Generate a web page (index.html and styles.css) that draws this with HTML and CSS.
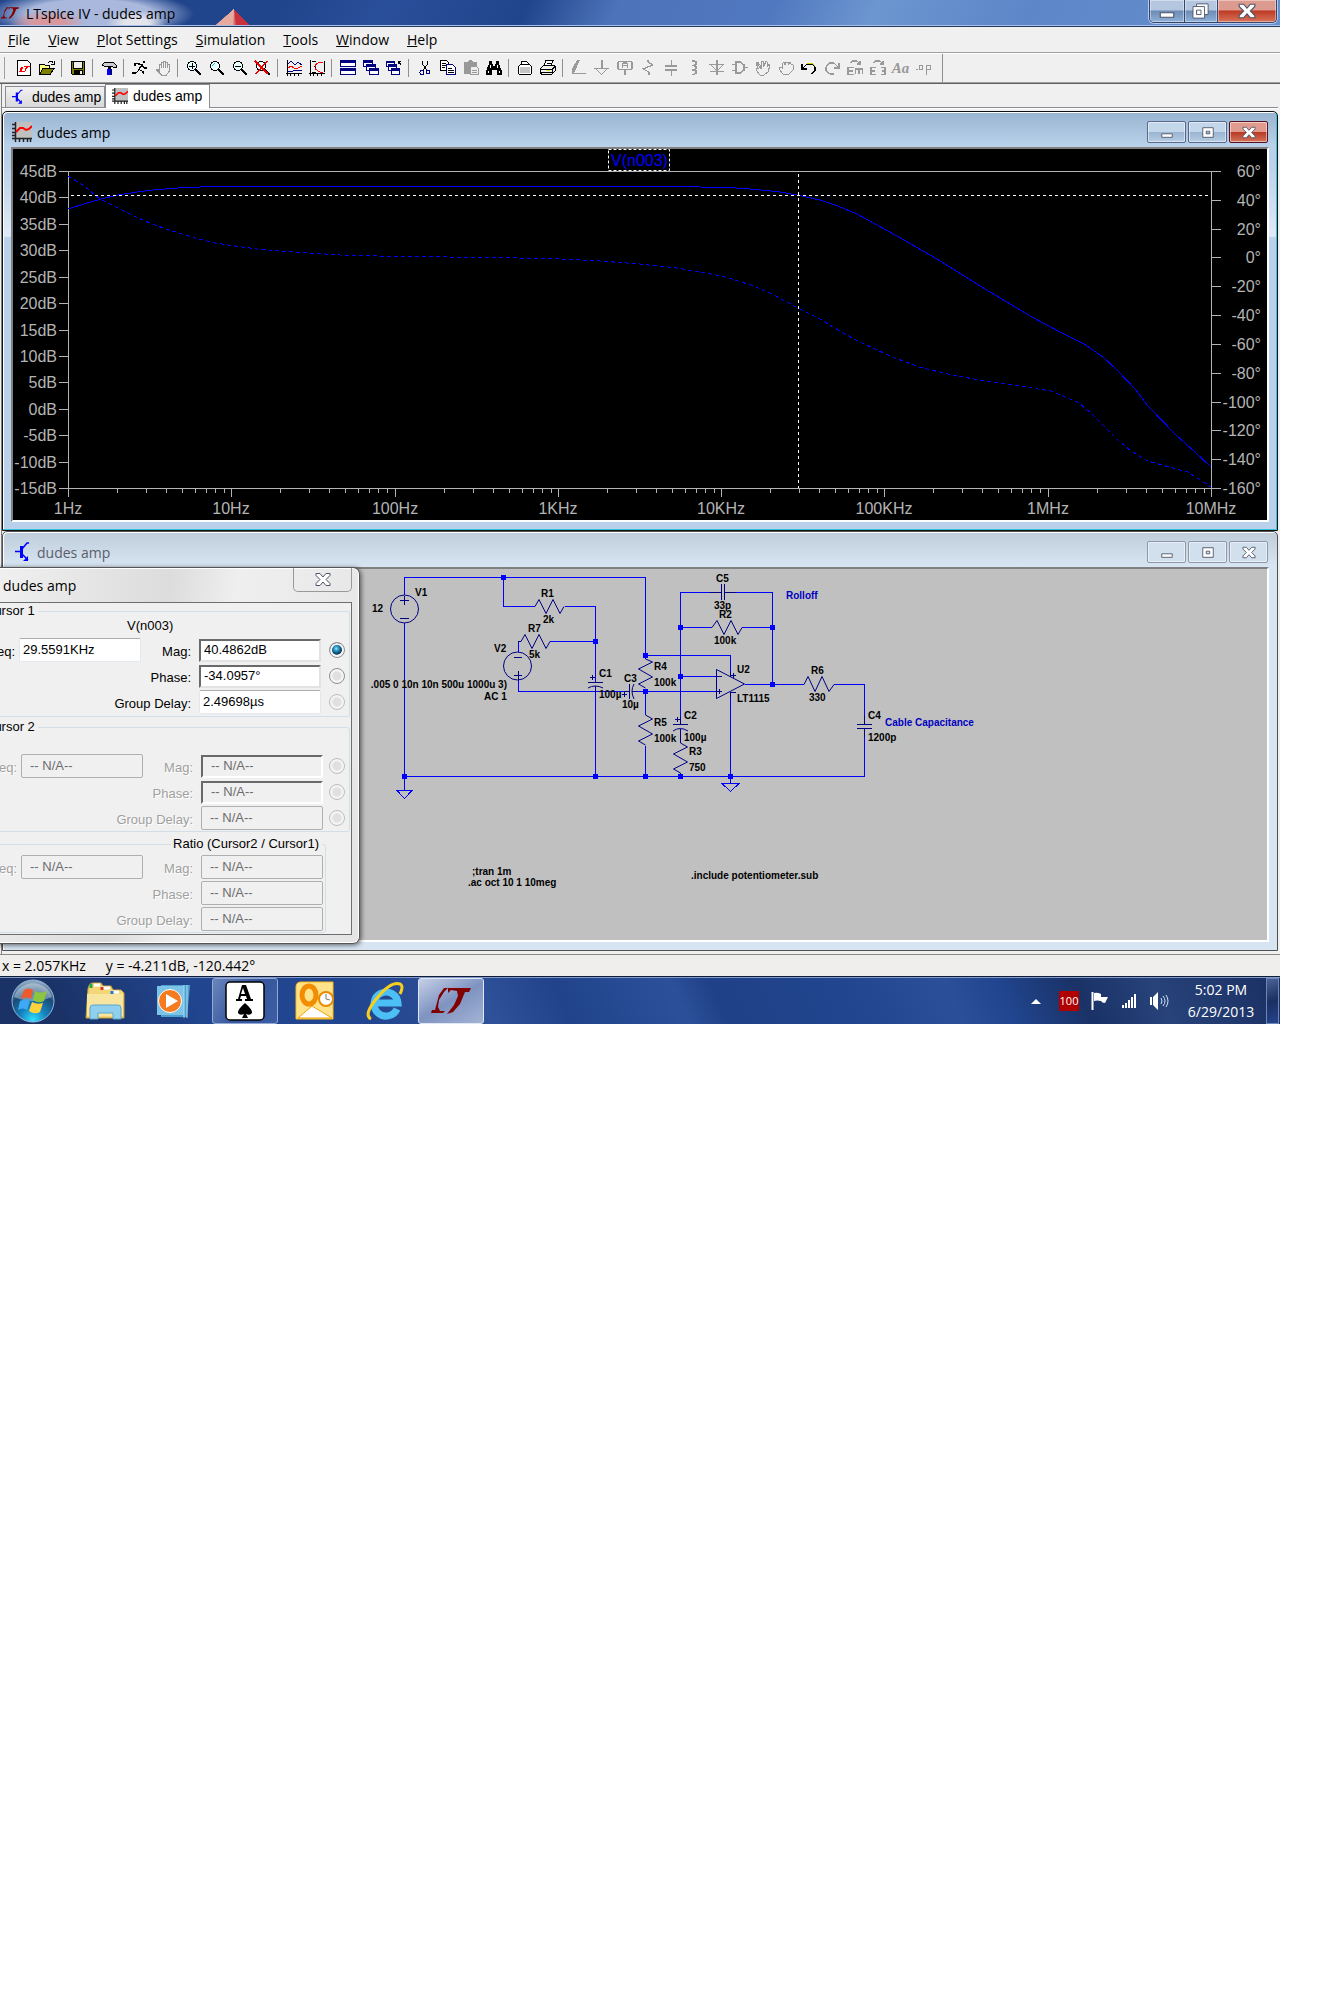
FILE: index.html
```html
<!DOCTYPE html>
<html lang="en">
<head>
<meta charset="utf-8">
<title>LTspice IV - dudes amp</title>
<link rel="stylesheet" href="styles.css">
</head>
<body>
<svg class="defs" width="0" height="0" aria-hidden="true">
  <defs>
    <symbol id="lt" viewBox="0 0 40 26"><path d="M13 0h4l-4 4-5 8-1 7 2 4h5l-2 2H0l1-3h3L8 7zM17 0h23l-2 4h-4l-5 12-7 8-6 2 7-9 4-9-1-5-6-1-3 3z" fill="#800000"/></symbol>
    <symbol id="wave" viewBox="0 0 20 20"><path fill="#c0c0c0" d="M3 0h17v17H3z"/><path d="M3.500 0v20M0 16.500h20M0 2.500h3M0 6.500h3M0 10.500h3M0 13.500h3M7.500 17v3M11.500 17v3M15.500 17v3M18.500 17v3" stroke="#222" stroke-width="1.500" fill="none"/><path d="M4 10l4-4h3l3 2 3-1 3-3" stroke="#f00" stroke-width="2" fill="none"/></symbol>
    <symbol id="npn" viewBox="0 0 16 20"><path d="M0 9.500h6M14 1h-2L7 7M7 12l6 6" stroke="#00f" stroke-width="1.500" fill="none"/><path fill="#00f" d="M5 4h3v12H5zM13 14v5H8z"/></symbol>
    <symbol id="xg" viewBox="0 0 16 14"><path d="M1 1h4l3 3.500L11 1h4v2l-4 4 4 4v2h-4L8 9.500 5 13H1v-2l4-4-4-4z" fill="#fff" stroke="#4c5468"/></symbol>
    <symbol id="ming" viewBox="0 0 16 14"><path d="M2 8.500h12v4H2z" fill="#fff" stroke="#4c5468"/></symbol>
    <symbol id="maxg" viewBox="0 0 16 14"><path fill-rule="evenodd" d="M2 1.500h12v11H2zM6 5.500v3h4v-3z" fill="#fff" stroke="#4c5468"/></symbol>
    <symbol id="lens" viewBox="0 0 16 16"><circle cx="6" cy="6" r="4.500" fill="#e8ffff" stroke="#000"/><path d="M10 10l5 5" stroke="#000" stroke-width="2"/></symbol>
  </defs>
</svg>

<main class="desktop">
  <header class="titlebar">
    <svg class="app-icon"><use href="#lt"/></svg>
    <h1 class="app-title">LTspice IV - dudes amp</h1>
    <div class="caption">
      <button class="cap cap-min" aria-label="Minimize"><svg><use href="#ming"/></svg></button>
      <button class="cap cap-max" aria-label="Restore"><svg viewBox="0 0 20 18"><path d="M5 1h13v12H5z" fill="#fff" stroke="#4c5468"/><path fill-rule="evenodd" d="M1 4h13v13H1zM5 8v5h5V8z" fill="#fff" stroke="#4c5468"/></svg></button>
      <button class="cap cap-close" aria-label="Close"><svg><use href="#xg"/></svg></button>
    </div>
  </header>

  <nav class="menubar">
    <a href="#"><u>F</u>ile</a><a href="#"><u>V</u>iew</a><a href="#"><u>P</u>lot Settings</a><a href="#"><u>S</u>imulation</a><a href="#"><u>T</u>ools</a><a href="#"><u>W</u>indow</a><a href="#"><u>H</u>elp</a>
  </nav>

  <div class="toolbar" role="toolbar" aria-label="Main">
    <button aria-label="New schematic"><svg viewBox="0 0 16 16"><path d="M1.500.5h10l3 3v12h-13z" fill="#fff" stroke="#000"/><path d="M3 12l2-5h2l-1 4h2l-1 1zM8 6h6l-1 1h-1l-3 5H8l2-5H8z" fill="#f00"/></svg></button>
    <button aria-label="Open"><svg viewBox="0 0 16 16"><path d="M.5 14V4.500h5l1 1h4V8" fill="#ffff80" stroke="#000"/><path d="M.5 14.500L4 8.500h11l-4 6z" fill="#808000" stroke="#000"/><path d="M9 3l2-2h2l1 2m1-2v3h-3" fill="none" stroke="#000"/></svg></button>
    <i></i>
    <button aria-label="Save"><svg viewBox="0 0 16 16"><path d="M1 1h14v14H2l-1-1z" fill="#000"/><path d="M2 2h1v7h10V2h1v12H2z" fill="#808000"/><path d="M4 2h8v6H4z" fill="#eee"/><path d="M4 10h9v4H4z" fill="#000"/><path d="M10 11h2v3h-2z" fill="#eee"/></svg></button>
    <i></i>
    <button aria-label="Control panel"><svg viewBox="0 0 16 16"><path d="M1 5l3-3h8l3 3v2h-3l-2-1H6L5 7 3 6z" fill="#ccc" stroke="#000"/><path d="M7 6h3v3H7z" fill="#000"/><path d="M6 9h5v6H6z" fill="#00f"/><path d="M9 9h2v6H9z" fill="#000080"/></svg></button>
    <i></i>
    <button aria-label="Run"><svg viewBox="0 0 16 16"><path d="M11 1h2v2h-2z"/><path d="M4 3.500l6 1-3 5 4 2 .5 3M10 5l2 3h3M7 10l-3 3H0M3 3v3" fill="none" stroke="#000" stroke-width="1.300"/></svg></button>
    <button aria-label="Halt" disabled><svg viewBox="0 0 16 16"><path d="M4.500 11V4h2V2h2V1h2v1h2v2h2v7l-3 4h-5l-5-5v-1h1zM6.500 4v4M8.500 3v5M10.500 3v5M12.500 4v4" fill="none" stroke="#999"/></svg></button>
    <i></i>
    <button aria-label="Zoom in"><svg viewBox="0 0 16 16"><use href="#lens"/><path d="M3 6h6M6 3v6" stroke="#000"/></svg></button>
    <button aria-label="Pan"><svg viewBox="0 0 16 16"><use href="#lens"/><path d="M3 6l3-3" stroke="#0cc"/></svg></button>
    <button aria-label="Zoom out"><svg viewBox="0 0 16 16"><use href="#lens"/><path d="M3 6h6" stroke="#000"/></svg></button>
    <button aria-label="Zoom to fit"><svg viewBox="0 0 16 16"><use href="#lens"/><path d="M0 1l13 13M12 1L1 14" stroke="#e00" stroke-width="1.500"/></svg></button>
    <i></i>
    <button aria-label="Autorange"><svg viewBox="0 0 16 16"><path d="M1.500 0v16M0 13.500h16M4.500 14v2M8.500 14v2M12.500 14v2" stroke="#000"/><path d="M2 4l3-3 4 4 3-3 4 3M2 11h5l2-1h7" fill="none" stroke="#000080"/><path d="M2 8l3-2 3 2h4l4-2" fill="none" stroke="#f00"/></svg></button>
    <button aria-label="Pick traces"><svg viewBox="0 0 16 16"><path d="M1.500 0v16M0 13.500h16M4.500 14v2M8.500 14v2M12.500 14v2M15.500 1v11" stroke="#000"/><path d="M14 2h-3L6 5v4l5 3h3" fill="none" stroke="#f00"/><path d="M3 1h4M3 12h4M5 6l2 2" stroke="#000"/></svg></button>
    <i></i>
    <button aria-label="Tile windows"><svg viewBox="0 0 16 16"><path d="M.5.500h15v6H.5zM.5 8.500h15v6H.5z" fill="#fff" stroke="#000080"/><path d="M0 0h16v3H0zM0 8h16v3H0z" fill="#000080"/></svg></button>
    <button aria-label="Cascade windows"><svg viewBox="0 0 16 16"><path d="M.5.500h9v6h-9zM3.500 4.500h9v6h-9zM6.500 8.500h9v6h-9z" fill="#fff" stroke="#000080"/><path d="M0 0h10v3H0zM3 4h10v3H3zM6 8h10v3H6z" fill="#000080"/></svg></button>
    <button aria-label="Close windows"><svg viewBox="0 0 16 16"><path d="M.5 1.500h8v5h-8zM2.500 4.500h8v6h-8zM5.500 8.500h8v6h-8z" fill="#fff" stroke="#000080"/><path d="M0 1h9v2H0zM2 4h9v3H2zM5 8h9v3H5z" fill="#000080"/><path d="M15 5l-3-4M12 4V1h3" fill="none" stroke="#000"/></svg></button>
    <i></i>
    <button aria-label="Cut"><svg viewBox="0 0 16 16"><path d="M5.500 1v3l4 6M10.500 1v3l-4 6" fill="none" stroke="#000"/><circle cx="5" cy="12.500" r="2" fill="none" stroke="#000080"/><circle cx="11" cy="12" r="2" fill="none" stroke="#000080"/></svg></button>
    <button aria-label="Copy"><svg viewBox="0 0 16 16"><path d="M.5.500h6l2 2v8h-8z" fill="#fff" stroke="#000"/><path d="M6.500 4.500h6l3 3v7h-9z" fill="#fff" stroke="#000080"/><path d="M2 3h4M2 5h4M2 7h3M8 8h4M8 10h6M8 12h6" stroke="#000"/></svg></button>
    <button aria-label="Paste"><svg viewBox="0 0 16 16"><path d="M1 2h4l1-2h3l1 2h4v12H1z" fill="#999"/><path d="M7.500 6.500h6l2 2v6h-8z" fill="#eee" stroke="#999"/><path d="M9 10h5M9 12h5" stroke="#999"/></svg></button>
    <button aria-label="Find"><svg viewBox="0 0 16 16"><path d="M3 1h3v3h1v2h2V4h1V1h3v3l3 7v4h-5v-5H6v5H0v-4l3-7z"/><path d="M4 5v3M11 5v3M2 11v2M13 11v2" stroke="#fff"/></svg></button>
    <i></i>
    <button aria-label="Print setup"><svg viewBox="0 0 16 16"><path d="M4.500 5V1.500h5l2 2V5M1.500 6.500l2-2h9l2 2v7l-1 1h-11l-1-1z" fill="#fff" stroke="#000" stroke-width="1.300"/><path d="M3 7h10v6H3z" fill="#c4c4c4"/></svg></button>
    <button aria-label="Print"><svg viewBox="0 0 16 16"><path d="M4 6l2-5.500h7L11 6" fill="#fff" stroke="#000"/><path d="M.5 8.500l3-3h10l2 1v4l-4 4h-10l-1-2z" fill="#eee" stroke="#000" stroke-width="1.300"/><path d="M1 9h11l3-2M1 12h11M12 9v5M7 3h4M6 5h4" fill="none" stroke="#000"/><path d="M7 10h3v1H7z" fill="#dd0"/></svg></button>
    <i></i>
    <button aria-label="Wire" disabled><svg viewBox="0 0 16 16"><path d="M6 0h3L4 11l-3 3V9z" fill="#999"/><path d="M1 13.500h14" stroke="#999"/></svg></button>
    <button aria-label="Ground" disabled><svg viewBox="0 0 16 16"><path d="M8 0v8M0 8.500h15M2 9l5.500 5.500L13 9" fill="none" stroke="#999" stroke-width="1.300"/></svg></button>
    <button aria-label="Label net" disabled><svg viewBox="0 0 16 16"><path d="M2 1.500h12l1 1v6l-1 1H2l-1-1v-6zM8 10v5M5.500 8V4l1-1h3l1 1v4M5 5.500h6" fill="none" stroke="#999" stroke-width="1.300"/></svg></button>
    <button aria-label="Resistor" disabled><svg viewBox="0 0 16 16"><path d="M8 0v2l5 3-10 4 6 3v3" fill="none" stroke="#999" stroke-width="1.300"/></svg></button>
    <button aria-label="Capacitor" disabled><svg viewBox="0 0 16 16"><path d="M8 0v6M8 10v6" stroke="#999"/><path d="M2 6h12M2 10h12" stroke="#999" stroke-width="2"/></svg></button>
    <button aria-label="Inductor" disabled><svg viewBox="0 0 16 16"><path d="M6 1h2l2 1v2L8 5.500H6M8 5.500l2 1v2L8 10H6M8 10l2 1v2l-2 1.500H6" fill="none" stroke="#999" stroke-width="1.500"/></svg></button>
    <button aria-label="Diode" disabled><svg viewBox="0 0 16 16"><path d="M8 0v15M0 4.500h15M2 5l6 6 6-6M1 11.500h14" fill="none" stroke="#999" stroke-width="1.300"/></svg></button>
    <button aria-label="Component" disabled><svg viewBox="0 0 16 16"><path d="M0 4.500h4M0 10.500h4M4 2h4l4 3v5l-4 3H4zM12 7.500h4" fill="none" stroke="#999" stroke-width="1.500"/></svg></button>
    <button aria-label="Move" disabled><svg viewBox="0 0 16 16"><path d="M5 15L1 10V8h2L1 3l2-1 3 5V1h2l1 5 2-5 1 1v5l2-3 1 1-2 7-4 3zM2 3l4 6M8 2v5" fill="none" stroke="#999"/></svg></button>
    <button aria-label="Drag" disabled><svg viewBox="0 0 16 16"><path d="M5 14l-4-5V7l3 1V4l2-2 1 3 1-3h2v3l2-3 1 2 2 1v5l-4 4z" fill="none" stroke="#999"/></svg></button>
    <button aria-label="Undo"><svg viewBox="0 0 16 16"><path d="M1 4v5h5M2 8l4-4h5l3 3v4l-4 3" fill="none" stroke="#000" stroke-width="1.300"/><path d="M6 3h5l3 3" fill="none" stroke="#cc0"/></svg></button>
    <button aria-label="Redo" disabled><svg viewBox="0 0 16 16"><path d="M15 3v5h-5M14 7l-4-4H5L2 7v4l4 3h4" fill="none" stroke="#999" stroke-width="1.300"/></svg></button>
    <button aria-label="Rotate" disabled><svg viewBox="0 0 16 16"><path d="M3 3l3-2h4l3 3M13 1v3h-3M7 7.500H1v7h6M1 11h5M8.500 14V9h7v5M12 9v5" fill="none" stroke="#999" stroke-width="1.400"/></svg></button>
    <button aria-label="Mirror" disabled><svg viewBox="0 0 16 16"><path d="M3 3l3-2h4l3 3M13 1v3h-3M6 7.500H1v7h5M1 11h4M11 7.500h4v7h-4M12 11h3" fill="none" stroke="#999" stroke-width="1.400"/></svg></button>
    <button aria-label="Text" class="txt" disabled><em>Aa</em></button>
    <button aria-label="SPICE directive" disabled><svg viewBox="0 0 16 16"><path d="M0 9h2v1H0z" fill="#999"/><path d="M3.500 5.500h3v4h-3zM10.500 15V5.500h4v4h-4" fill="none" stroke="#999" stroke-width="1.500"/></svg></button>
    <i class="end"></i>
  </div>

  <section class="workspace">
    <div class="tabs">
      <button class="tab"><svg class="ic-npn"><use href="#npn"/></svg>dudes amp</button>
      <button class="tab tab-on"><svg class="ic-wave"><use href="#wave"/></svg>dudes amp</button>
    </div>

    <article class="win win-active">
      <header class="win-title">
        <svg class="win-icon"><use href="#wave"/></svg>
        <h2>dudes amp</h2>
        <div class="win-btns">
          <button aria-label="Minimize"><svg><use href="#ming"/></svg></button>
          <button aria-label="Maximize"><svg><use href="#maxg"/></svg></button>
          <button class="close" aria-label="Close"><svg><use href="#xg"/></svg></button>
        </div>
      </header>
      <svg class="canvas plot" viewBox="13 149 1254 371">
        <rect x="608.500" y="149.500" width="61" height="21" fill="none" stroke="#fff" stroke-dasharray="3 2"/>
        <text x="611" y="166" fill="#0000ff">V(n003)</text>
        <g class="axis">
          <path d="M59 171.500H1221M68.500 171V497M1211.500 171V497M59 488.500H1221"/>
          <path d="M59 197.500h9M59 224.500h9M59 250.500h9M59 277.500h9M59 303.500h9M59 330.500h9M59 356.500h9M59 382.500h9M59 409.500h9M59 435.500h9M59 462.500h9"/>
          <path d="M1212 200.500h9M1212 229.500h9M1212 257.500h9M1212 286.500h9M1212 315.500h9M1212 344.500h9M1212 373.500h9M1212 402.500h9M1212 430.500h9M1212 459.500h9"/>
          <path d="M231.500 488v9M395.500 488v9M558.500 488v9M721.500 488v9M884.500 488v9M1048.500 488v9"/>
          <path d="M117.500 488v5m29-5v5m20-5v5m16-5v5m13-5v5m11-5v5m9-5v5m9-5v5M280.500 488v5m29-5v5m20-5v5m16-5v5m13-5v5m11-5v5m9-5v5m9-5v5M444.500 488v5m29-5v5m20-5v5m16-5v5m13-5v5m11-5v5m9-5v5m9-5v5M607.500 488v5m29-5v5m20-5v5m16-5v5m13-5v5m11-5v5m9-5v5m9-5v5M770.500 488v5m29-5v5m20-5v5m16-5v5m13-5v5m11-5v5m9-5v5m9-5v5M933.500 488v5m29-5v5m20-5v5m16-5v5m13-5v5m11-5v5m9-5v5m9-5v5M1097.500 488v5m29-5v5m20-5v5m16-5v5m13-5v5m11-5v5m9-5v5m9-5v5"/>
        </g>
        <g class="lab end">
          <text x="57" y="177">45dB</text><text x="57" y="203">40dB</text><text x="57" y="230">35dB</text><text x="57" y="256">30dB</text><text x="57" y="283">25dB</text><text x="57" y="309">20dB</text><text x="57" y="336">15dB</text><text x="57" y="362">10dB</text><text x="57" y="388">5dB</text><text x="57" y="415">0dB</text><text x="57" y="441">-5dB</text><text x="57" y="468">-10dB</text><text x="57" y="494">-15dB</text>
          <text x="1261" y="177">60°</text><text x="1261" y="206">40°</text><text x="1261" y="235">20°</text><text x="1261" y="263">0°</text><text x="1261" y="292">-20°</text><text x="1261" y="321">-40°</text><text x="1261" y="350">-60°</text><text x="1261" y="379">-80°</text><text x="1261" y="408">-100°</text><text x="1261" y="436">-120°</text><text x="1261" y="465">-140°</text><text x="1261" y="494">-160°</text>
        </g>
        <g class="lab mid">
          <text x="68" y="514">1Hz</text><text x="231" y="514">10Hz</text><text x="395" y="514">100Hz</text><text x="558" y="514">1KHz</text><text x="721" y="514">10KHz</text><text x="884" y="514">100KHz</text><text x="1048" y="514">1MHz</text><text x="1211" y="514">10MHz</text>
        </g>
        <path class="trace" d="M68 209L84 204L101 199L118 195L137 192L153 190L178 188L200 187L250 186.500H676L700 187L726 187.500L745 188.500L761 190L780 192L797 195L820 200L838 206L857 214L897 236L937 259L985 289L1032 317L1060 332L1084 344L1103 357L1117 370L1136 390L1148 406L1176 435L1195 452L1211 467"/>
        <path class="trace dash" d="M68 176L84 186L100 199L118 208L136 217L152 224L166 229L195 238L215 243L235 246L257 249L280 251L310 253L340 255L400 256.500L500 257.500L560 259L600 261L640 264L677 268L722 276L751 285L772 294L798 308L820 319L843 333L862 343L890 356L919 367L952 375L985 381L1013 385L1032 388L1051 391L1079 403L1093 415L1107 429L1119 441L1131 451L1148 461L1169 467L1188 472L1211 487"/>
        <path class="cursor" d="M71 195.500H1210M798.500 174V488"/>
      </svg>
    </article>

    <article class="win win-idle">
      <header class="win-title">
        <svg class="win-icon win-npn"><use href="#npn"/></svg>
        <h2>dudes amp</h2>
        <div class="win-btns">
          <button aria-label="Minimize"><svg><use href="#ming"/></svg></button>
          <button aria-label="Maximize"><svg><use href="#maxg"/></svg></button>
          <button aria-label="Close"><svg><use href="#xg"/></svg></button>
        </div>
      </header>
      <svg class="canvas schem" viewBox="13 569 1254 371">
        <g class="wire">
          <path d="M404.500 595V577.500H645.500V655M503.500 577V606.500H535M565 606.500H595.500V682M550 641.500H595M518.500 652V641.500M518.500 680V691.500H624M636 691.500H716M595.500 691V776M404.500 623V790M404 776.500H864.500V733M645.500 689V715M645.500 746V776M645 655.500H730.500V672M680.500 720V592.500H712M734 592.500H772.500V684M680 627.500H712M742 627.500H772M680 676.500H716M730.500 698V783M745 684.500H804M834 684.500H864.500V720"/>
          <path d="M397 790.500h15l-7.500 8zM722 783.500h17l-8.500 8z"/>
        </g>
        <g class="part">
          <circle cx="404.500" cy="609" r="14"/><circle cx="517.500" cy="666" r="14"/>
          <path d="M400 600.500h9M404.500 596v9M400 618.500h9M514 657.500h8M514 675.500h8M518.500 671v9"/>
          <path d="M535 606.500l4-7 7 14 7-14 7 14 4-7M518 641.500h3l4-7 7 14 7-14 7 14 4-7M712 627.500l5-7 7 14 7-14 7 14 4-7M804 684.500l4-8 7 15 7-15 7 15 5-7"/>
          <path d="M645.500 655v4l7 3-14 7 14 8-14 7 7 4M645.500 715l7 4-14 7 14 8-14 7 7 4M680.500 743l7 4-14 7 14 8-14 7 7 4v3"/>
          <path d="M588 682.500h15M595.500 686v6M588 688q7-4 15 0M590 677.500h5M592.500 675v5M629.500 684v15M634 684q-4 7 0 15M624 691.500h5M632 691.500h5M622 694.500h5M624.500 692v5M673 724.500h15M680.500 717v7M673 731q7-5 15 0M680.500 729v14M675 719.500h5M677.500 717v5M721.500 584v16M724.500 584v16M710 592.500h11M725 592.500h11M857 724.500h15M857 728.500h15M864.500 716v8M864.500 729v8"/>
          <path d="M716.500 669.500V698.500L744.500 684zM717 676.500h5M717 691.500h5M719.500 689v5M731 675.500h5M733.500 673v5M731 692.500h5M730.500 672v5M730.500 692v6"/>
        </g>
        <path class="node" d="M501 575h5v5h-5zM593 639h5v5h-5zM643 653h5v5h-5zM643 689h5v5h-5zM402 774h5v5h-5zM593 774h5v5h-5zM643 774h5v5h-5zM678 774h5v5h-5zM728 774h5v5h-5zM678 625h5v5h-5zM678 674h5v5h-5zM770 625h5v5h-5zM770 682h5v5h-5z"/>
        <g class="ref">
          <text x="415" y="596">V1</text><text x="372" y="612">12</text><text x="541" y="597">R1</text><text x="543" y="623">2k</text><text x="528" y="632">R7</text><text x="529" y="658">5k</text><text x="494" y="652">V2</text>
          <text x="507" y="688" text-anchor="end">.005 0 10n 10n 500u 1000u 3)</text><text x="484" y="700">AC 1</text><text x="599" y="677">C1</text><text x="599" y="698">100µ</text><text x="624" y="682">C3</text><text x="622" y="708">10µ</text><text x="654" y="670">R4</text><text x="654" y="686">100k</text><text x="654" y="726">R5</text><text x="654" y="742">100k</text>
          <text x="716" y="582">C5</text><text x="714" y="609">33p</text><text x="719" y="618">R2</text><text x="714" y="644">100k</text><text x="737" y="673">U2</text><text x="737" y="702">LT1115</text><text x="684" y="719">C2</text><text x="684" y="741">100µ</text><text x="689" y="755">R3</text><text x="689" y="771">750</text><text x="811" y="674">R6</text><text x="809" y="701">330</text><text x="868" y="719">C4</text><text x="868" y="741">1200p</text>
          <text x="472" y="875">;tran 1m</text><text x="468" y="886">.ac oct 10 1 10meg</text><text x="691" y="879">.include potentiometer.sub</text>
          <g fill="#0000c0"><text x="786" y="599">Rolloff</text><text x="885" y="726">Cable Capacitance</text></g>
        </g>
      </svg>
    </article>
  </section>

  <footer class="status"><span>x = 2.057KHz</span><span>y = -4.211dB, -120.442°</span></footer>

  <form class="dialog">
    <header class="dlg-title"><h2>dudes amp</h2><button type="button" class="dlg-close" aria-label="Close"><svg><use href="#xg"/></svg></button></header>
    <div class="dlg-body">
      <fieldset class="grp g1">
        <legend>Cursor 1</legend>
        <p class="net">V(n003)</p>
        <div class="fields">
          <label for="f1">Freq:</label><input id="f1" value="29.5591KHz"><label for="m1">Mag:</label><input class="deep" id="m1" value="40.4862dB"><input type="radio" name="c" checked aria-label="Magnitude 1">
          <label class="wide" for="p1">Phase:</label><input class="deep" id="p1" value="-34.0957°"><input type="radio" name="c" aria-label="Phase 1">
          <label class="wide" for="d1">Group Delay:</label><input id="d1" value="2.49698µs"><input type="radio" name="c" disabled aria-label="Group delay 1">
        </div>
      </fieldset>
      <fieldset class="grp g2">
        <legend>Cursor 2</legend>
        <div class="fields off">
          <label for="f2">Freq:</label><input id="f2" value="-- N/A--" disabled><label for="m2">Mag:</label><input class="deep" id="m2" value="-- N/A--" disabled><input type="radio" name="c" disabled aria-label="Magnitude 2">
          <label class="wide" for="p2">Phase:</label><input class="deep" id="p2" value="-- N/A--" disabled><input type="radio" name="c" disabled aria-label="Phase 2">
          <label class="wide" for="d2">Group Delay:</label><input id="d2" value="-- N/A--" disabled><input type="radio" name="c" disabled aria-label="Group delay 2">
        </div>
      </fieldset>
      <fieldset class="grp g3">
        <legend>Ratio (Cursor2 / Cursor1)</legend>
        <div class="fields off">
          <label for="f3">Freq:</label><input id="f3" value="-- N/A--" disabled><label for="m3">Mag:</label><input id="m3" value="-- N/A--" disabled>
          <label class="wide" for="p3">Phase:</label><input id="p3" value="-- N/A--" disabled>
          <label class="wide" for="d3">Group Delay:</label><input id="d3" value="-- N/A--" disabled>
        </div>
      </fieldset>
    </div>
  </form>

  <nav class="taskbar" aria-label="Taskbar">
    <button class="start" aria-label="Start"><svg viewBox="0 0 44 44"><defs><radialGradient id="orb" cx=".5" cy=".95" r=".9"><stop offset="0" stop-color="#2fe0ff"/><stop offset=".35" stop-color="#1583c0"/><stop offset=".7" stop-color="#1b4a78"/><stop offset="1" stop-color="#8aa5bd"/></radialGradient></defs><circle cx="22" cy="22" r="21" fill="url(#orb)" stroke="#8fb6d8"/><path d="M3 18a20 20 0 0138 0q-19 8-38 0z" fill="#fff" opacity=".35"/><path d="M13 11q5-3 9 0l-2 9q-5-3-10 0z" fill="#f0592a"/><path d="M24 12q5 3 12 0l-3 10q-6 3-11-1z" fill="#8cc63f"/><path d="M9 22q5-3 10 0l-3 9q-4-3-9 0z" fill="#3fa9f5"/><path d="M21 23q5 3 11 1l-3 9q-6 3-11-1z" fill="#ffd23c"/></svg></button>
    <button class="task explorer" aria-label="Explorer"><svg viewBox="0 0 40 40"><path d="M3 8q1-6 5-6h8l2 3h8l2 4h8l3 3v25H1z" fill="#f3d678" stroke="#c8a038"/><path d="M9 4h6M17 7h8M27 11h7" stroke="#fff" stroke-width="3"/><path d="M6 3v4" stroke="#2a4" stroke-width="3"/><path d="M17 6v3" stroke="#d32" stroke-width="3"/><path d="M27 10v3" stroke="#27c" stroke-width="3"/><path d="M2 13h36v22H2z" fill="#f8e6a0"/><path d="M5 27q0-3 3-3h25q3 0 3 3v11h-8v-6H13v6H5z" fill="#8fd0ee" stroke="#5aa6cf"/></svg></button>
    <button class="task media" aria-label="Media player"><svg viewBox="0 0 40 40"><path d="M8 4h29l-3 32H8z" fill="#4d9fd0"/><path d="M4 5h27v29H4z" fill="#7cc3e8"/><path d="M31 4v33M34 4v33" stroke="#a9dcf2"/><circle cx="17" cy="20" r="11.500" fill="#f47b20" stroke="#fff"/><path d="M13 13v14l12-7z" fill="#fff"/></svg></button>
    <button class="task open" aria-label="Solitaire"><svg viewBox="0 0 40 40"><rect x="1" y="1" width="38" height="38" rx="4" fill="#fff" stroke="#000" stroke-width="1.500"/><path d="M17 4h4l5 14h2v2h-8v-2h2l-1-3h-5l-1 3h2v2h-6v-2h2zM18 7l-2 6h4z"/><path d="M20 22q8 7 7 10-2 3-6 1l2 4h-6l2-4q-4 2-6-1-1-3 7-10z"/></svg></button>
    <button class="task" aria-label="Outlook"><svg viewBox="0 0 40 40"><path d="M2 6q0-5 5-5h32v37H2z" fill="#ffe28a" stroke="#fdb913"/><path d="M4 37l14-12 20 12z" fill="#fff" stroke="#f0a500"/><ellipse cx="15" cy="14" rx="7" ry="9" fill="none" stroke="#f28c00" stroke-width="5"/><circle cx="32" cy="18" r="7" fill="#fff" stroke="#e98b00" stroke-width="2"/><path d="M32 13v5l4 1" fill="none" stroke="#777"/></svg></button>
    <button class="task" aria-label="Internet Explorer"><svg viewBox="0 0 40 40"><path d="M32 28A12 12 0 1133 22H12" fill="none" stroke="#4cc0f4" stroke-width="7"/><path d="M6 38Q-2 34 12 17T35 3q4 2 0 10" fill="none" stroke="#f8cf1c" stroke-width="3"/></svg></button>
    <button class="task open current" aria-label="LTspice"><svg class="lt-big"><use href="#lt"/></svg></button>
    <div class="tray">
      <svg width="10" height="6" viewBox="0 0 10 6"><path d="M0 6l5-5 5 5z" fill="#fff"/></svg>
      <span class="batt">100</span>
      <svg width="18" height="20" viewBox="0 0 18 20"><path d="M1.500 1v18" stroke="#fff" stroke-width="2"/><path d="M3 2q3-1 7 1v3h7l-3 6q-3 0-4-2-4-1-7 0z" fill="#fff"/></svg>
      <svg width="16" height="16" viewBox="0 0 16 16"><path d="M1 12h2v3H1zM4 10h2v5H4zM7 7h2v8H7zM10 4h2v11h-2zM13 1h2v14h-2z" fill="#fff"/></svg>
      <svg width="20" height="20" viewBox="0 0 20 20"><path d="M1 6h2v8H1zM4 6l5-5v18l-5-5z" fill="#fff"/><path d="M12 7q2 3 0 6M14 5q4 5 0 10M17 4q4 6 0 12" fill="none" stroke="#cfe0f5"/></svg>
      <time class="clock"><span>5:02 PM</span><span>6/29/2013</span></time>
    </div>
    <button class="peek" aria-label="Show desktop"></button>
  </nav>
</main>
</body>
</html>
```
FILE: styles.css
```css
* { box-sizing: border-box; }
body { margin: 0; background: #fff; font-family: "Open Sans", "Noto Sans", sans-serif; font-size: 14px; color: #000; }
h1, h2, p { margin: 0; font-size: 14px; font-weight: 400; }
button { margin: 0; padding: 0; border: 0; background: none; font: inherit; color: inherit; }
svg { display: block; }
.defs { position: absolute; }

.desktop { position: relative; margin-right: 48px; overflow: hidden; background: #f0f0f0; }

/* main title bar */
.titlebar {
  display: flex; align-items: center; height: 27px; padding-right: 3px;
  border-bottom: 1px solid #26395f; box-shadow: inset 0 -1px #a9c0ea;
  background:
    radial-gradient(ellipse 38px 14px at 48px 24px, #d9969c 40%, #d9969c00 100%),
    radial-gradient(ellipse 30px 14px at 136px 24px, #e4e4ec 40%, #e4e4ec00 100%),
    radial-gradient(ellipse 104px 24px at 90px 14px, #a9b8dc 60%, #a9b8dc00 100%),
    conic-gradient(from 136deg at 234px 9px, #c8323c 0 34deg, #e6aa9e 50deg 92deg, transparent 94deg) 0 0 / 100% 100%,
    linear-gradient(115deg, #21458c 0 22%, #2a4f9a 30%, #21458c 41%, #4d74ba 48%, #5078c0 60%, #6c96cf 68%, #5c86c8 80%, #668fce 100%);
}
.app-icon { width: 18px; height: 12px; margin: 0 7px 0 1px; }
.app-title { flex: 1; padding-top: 2px; line-height: 20px; }
.caption { display: flex; align-self: flex-start; height: 23px; border: 1px solid #34466e; border-top: 0; border-radius: 0 0 5px 5px; overflow: hidden; box-shadow: 0 0 0 1px #b4c8ea; }
.cap { display: grid; place-items: center; border-right: 1px solid #34466e; background: linear-gradient(#b5c7e0 0 45%, #6c8cb6 50%, #8fb0d8); box-shadow: inset 0 0 0 1px #ffffff66; }
.cap svg { width: 18px; height: 16px; }
.cap-min { width: 35px; }
.cap-max { width: 33px; }
.cap-close { width: 58px; border-right: 0; background: linear-gradient(#dd9a8e 0 45%, #be3a25 50%, #d8745a); }

.menubar { display: flex; gap: 18px; height: 26px; padding: 0 8px; line-height: 26px; border-bottom: 1px solid #a0a0a0; }
.menubar a { color: #000; text-decoration: none; }

.toolbar { display: flex; align-items: center; height: 30px; padding-left: 12px; border-top: 1px solid #fff; border-bottom: 1px solid #a0a0a0; background: linear-gradient(#a0a0a0, #a0a0a0) 4px 3px / 1px 22px no-repeat; }
.toolbar button { display: grid; place-items: center; flex: none; width: 23px; height: 24px; }
.toolbar svg { width: 16px; height: 16px; overflow: visible; shape-rendering: crispEdges; }
.toolbar i { flex: none; width: 8px; height: 18px; background: linear-gradient(#909090, #909090) 3px 0 / 1px 100% no-repeat; }
.toolbar .end { height: 28px; margin-left: 4px; }
.toolbar .txt { font: 700 15px/16px "Liberation Serif", serif; color: #999; }

/* document area */
.workspace { padding: 0 2px 3px; border-top: 1px solid #606060; background: linear-gradient(#808080, #808080) 1px 0 / 1px 100% no-repeat; }
.tabs { display: flex; align-items: flex-end; height: 24px; margin-bottom: 3px; padding-left: 3px; border-bottom: 1px solid #8b8b93; box-shadow: 0 1px #fff; font-family: "Liberation Sans", Arial, sans-serif; }
.tab { display: flex; align-items: center; gap: 7px; width: 100px; height: 21px; padding-left: 6px; border: 1px solid #8b8b93; border-bottom: 0; background: linear-gradient(#f2f2f2, #d8d8d8); white-space: nowrap; }
.tab-on { gap: 5px; width: 105px; height: 24px; margin-bottom: -1px; padding-bottom: 2px; background: #fff; }
.ic-npn { flex: none; width: 12px; height: 16px; margin-right: 1px; }
.ic-wave { flex: none; width: 16px; height: 16px; }

.win { padding: 1px 8px 8px; border: 1px solid #111; border-radius: 5px 5px 0 0; }
.win-active { background: linear-gradient(#99b4d1 0, #b9d1ea 34px, #b9d1ea 50px, #dfeaf7 124px, #b9d1ea 126px); box-shadow: inset -1px -1px #36c4dc, inset 1px 1px #fff; }
.win-idle { background: linear-gradient(#bfcddb 0, #d7e4f2 34px); border-color: #505050; box-shadow: inset 1px 1px #fff; color: #5a6068; }
.win-title { display: flex; align-items: center; height: 34px; padding: 6px 1px 2px 0; }
.win-icon { width: 20px; height: 20px; margin: 0 5px 0 1px; }
.win-npn { width: 16px; margin: 0 6px 0 4px; }
.win-title h2 { flex: 1; }
.win-btns { display: flex; gap: 2px; }
.win-btns button { display: grid; place-items: center; width: 39px; height: 22px; border: 1px solid #56698c; border-radius: 2px; background: linear-gradient(#c3d6ea 0 48%, #9bb4d0 52%, #b6cce4); box-shadow: inset 0 0 0 1px #ffffff80; }
.win-btns .close { border-color: #521422; background: linear-gradient(#e09a8e 0 48%, #b83a24 52%, #d4745c); }
.win-idle .win-btns button { background: #d2dfec; border-color: #8c98a8; }
.win-btns svg { width: 14px; height: 13px; }
.canvas { width: 100%; height: auto; border: 2px solid #808080; border-right-color: #fff; border-bottom-color: #fff; }

.plot { background: #000; font: 16px "Liberation Sans", Arial, sans-serif; }
.axis { fill: none; stroke: #b4b4b4; shape-rendering: crispEdges; }
.lab { fill: #b4b4b4; }
.lab.end { text-anchor: end; }
.lab.mid { text-anchor: middle; }
.trace { fill: none; stroke: #00f; shape-rendering: crispEdges; }
.dash { stroke-dasharray: 4 3; }
.cursor { fill: none; stroke: #fff; stroke-dasharray: 3 3; shape-rendering: crispEdges; }
.schem { background: #c0c0c0; font: 700 10px "Liberation Sans", Arial, sans-serif; }
.wire { fill: none; stroke: #00f; shape-rendering: crispEdges; }
.part { fill: none; stroke: #000080; }
.node { fill: #00f; }
.ref { fill: #000; }

.status { display: flex; gap: 20px; height: 22px; padding-left: 2px; line-height: 22px; border-top: 1px solid #8a8a8a; background: #f0eeec; white-space: pre; }

/* cursor read-out, floating over the documents */
.dialog { position: absolute; top: 567px; left: -36px; width: 396px; padding: 0 7px 8px 8px; border: 1px solid #555; border-left: 0; border-radius: 0 7px 7px 0; background: linear-gradient(100deg, #f4f4f4, #dcdcdc 45%, #efefef 60%, #e4e4e4); box-shadow: 1px 1px 5px #0009, inset 0 0 0 1px #fff; font: 13px "Liberation Sans", Arial, sans-serif; }
.dlg-title { display: flex; justify-content: space-between; height: 34px; padding-left: 31px; }
.dlg-title h2 { font-family: "Open Sans", "Noto Sans", sans-serif; line-height: 35px; }
.dlg-close { display: grid; place-items: center; width: 59px; height: 24px; border: 1px solid #999; border-top: 0; border-radius: 0 0 5px 5px; }
.dlg-close svg { width: 16px; height: 15px; }
.dlg-body { padding: 0 1px 0 2px; border: 1px solid #6e6e6e; border-left: 0; background: #f0f0f0; }
.grp { min-width: 0; margin: 0 0 2px; padding: 0; border: 1px solid #d3dfe8; border-radius: 3px; }
.grp legend { margin-left: 8px; padding: 0 3px 0 2px; line-height: 16px; }
.net { margin: 0 0 5px 152px; font-size: 13px; line-height: 14px; }
.g2 .fields { padding-top: 19px; }
.g3 { margin: 4px 24px 1px 0; }
.g3 legend { margin-left: auto; margin-right: 3px; }
.g3 .fields { padding-top: 3px; }
.fields { display: grid; grid-template-columns: 44px 122px 58px 122px 1fr; grid-auto-rows: 24px; row-gap: 2px; align-items: center; padding-bottom: 2px; }
.g2 .fields, .g3 .fields { grid-template-columns: 46px 122px 58px 122px 1fr; padding-bottom: 1px; }
.fields label { justify-self: end; padding: 2px 8px 0 0; }
.fields label:first-child { padding-right: 4px; }
.fields .wide { grid-column: 1 / 4; }
.g3 .fields input:nth-of-type(n + 2) { grid-column: 4; }
.off label { color: #a0a0a0; text-shadow: 1px 1px #fff; }
.fields input:not([type=radio]) { width: 100%; height: 24px; padding: 0 3px 2px; border: 1px solid #e2e8ee; border-top-color: #abadb3; border-radius: 2px; background: #fff; font: inherit; color: #000; }
.fields .deep:not([type=radio]) { height: 23px; border: 2px solid #696969; border-right-color: #e3e3e3; border-bottom-color: #e3e3e3; border-radius: 0; }
.off input:not([type=radio]):disabled { padding-left: 8px; border-color: #afafaf; background: #f0f0f0; color: #6d6d6d; }
.off .deep:not([type=radio]):disabled { border-color: #696969 #fff #fff #696969; }
.fields input[type=radio] { appearance: none; justify-self: end; width: 16px; height: 16px; margin: 0 4px 0 0; border: 1px solid #8e8f8f; border-radius: 50%; background: radial-gradient(#e0e0e0 0 40%, #f8f8f8 60%); box-shadow: inset 0 0 0 2px #f4f4f4; }
.fields input[type=radio]:checked { background: radial-gradient(circle at 45% 40%, #8fe0ff 0, #1b87b8 25%, #0a3350 50%, #f4f4f4 60%); }
.fields input[type=radio]:disabled { border-color: #bcbcbc; }

.taskbar { display: flex; align-items: center; height: 48px; border-top: 1px solid #101c38; box-shadow: inset 0 1px #7f9acb; background: linear-gradient(65deg, #1a3266 0 5%, #22458f 16% 28%, #2f5199 38%, #20438b 44%, #2c509a 53%, #1f4187 56%, #21458f 66%, #2b4f98 74%, #21458f 78%, #1a3266 84%, #27437a 90%, #1a2f62); }
.start { width: 44px; height: 44px; margin: 0 27px 0 11px; }
.task { display: grid; place-items: center; width: 66px; height: 46px; border-radius: 3px; }
.task.explorer { width: 46px; margin-right: 22px; }
.task.media { width: 46px; margin-right: 16px; }
.task svg { width: 40px; height: 40px; }
.task.open { border: 1px solid #93a8d2; background: linear-gradient(120deg, #6c86bc, #35569c 50%, #3d5ea5); margin-right: 3px; }
.task.open + .task { margin-right: 5px; }
.task.current { border-color: #dfe7f5; background: linear-gradient(150deg, #c5d0e6, #7e93c1 50%, #a3b3d4); }
.task .lt-big { width: 40px; height: 26px; }
.tray { display: flex; align-items: center; gap: 12px; margin-left: auto; color: #fff; }
.batt { width: 20px; margin-left: 6px; line-height: 20px; background: #b00000; font-size: 11px; text-align: center; }
.clock { display: flex; flex-direction: column; width: 72px; margin-left: 4px; line-height: 22px; text-align: center; }
.peek { width: 13px; height: 46px; margin: 0 1px 0 9px; border: 1px solid #6d86b5; background: linear-gradient(160deg, #4a6396, #1a2f62 50%, #25448c); }
```
